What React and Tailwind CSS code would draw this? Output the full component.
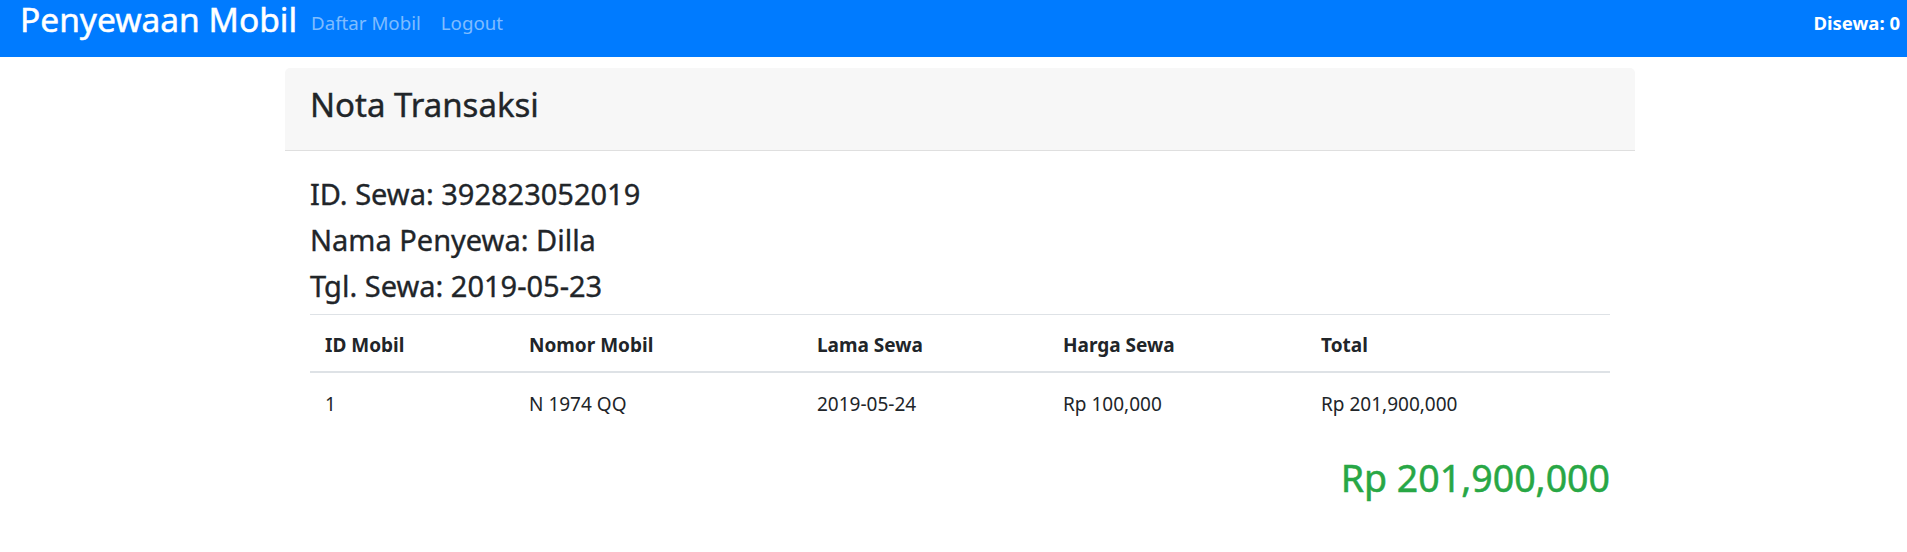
const rows = [
  { id: '1', nomor: 'N 1974 QQ', lama: '2019-05-24', harga: 'Rp 100,000', total: 'Rp 201,900,000' },
]

const cols = [
  { key: 'id', label: 'ID Mobil', w: 'w-[204px]' },
  { key: 'nomor', label: 'Nomor Mobil', w: 'w-[288px]' },
  { key: 'lama', label: 'Lama Sewa', w: 'w-[246px]' },
  { key: 'harga', label: 'Harga Sewa', w: 'w-[258px]' },
  { key: 'total', label: 'Total', w: 'w-[304px]' },
]

function Navbar() {
  return (
    <nav className="flex h-[57px] items-start justify-between bg-[#007bff] pl-[20px] pr-[7px]">
      <div className="flex items-start">
        <a
          href="#"
          className="mr-[4px] text-[33.5px] leading-[38px] text-white [-webkit-text-stroke:0.5px_currentColor]"
        >
          Penyewaan Mobil
        </a>
        <a href="#" className="mt-[9px] px-[10px] text-[18.7px] leading-[28px] text-white/50">
          Daftar Mobil
        </a>
        <a href="#" className="mt-[9px] px-[10px] text-[18.7px] leading-[28px] text-white/50">
          Logout
        </a>
      </div>
      <span className="mt-[9px] text-[18.5px] font-bold leading-[28px] text-white">
        Disewa: 0
      </span>
    </nav>
  )
}

export default function App() {
  return (
    <div className="min-h-screen bg-white font-['Segoe_UI','Noto_Sans',sans-serif] text-[#212529]">
      <Navbar />

      <div className="pl-[285px] pt-[11px]">
        <div className="w-[1350px] rounded-[5px] bg-white">
          <div className="h-[83px] rounded-t-[5px] border-b border-[#dfdfdf] bg-[#f7f7f7] px-[25px] pt-[16px]">
            <h3 className="text-[33px] leading-[42px] [-webkit-text-stroke:0.4px_currentColor]">
              Nota Transaksi
            </h3>
          </div>

          <div className="p-[25px] [&_h4]:[-webkit-text-stroke:0.35px_currentColor]">
            <h4 className="mb-[10px] text-[29px] leading-[36px]">ID. Sewa: 392823052019</h4>
            <h4 className="mb-[10px] text-[29px] leading-[36px]">Nama Penyewa: Dilla</h4>
            <h4 className="mb-[10px] text-[29px] leading-[36px]">Tgl. Sewa: 2019-05-23</h4>

            <div className="text-[19px] leading-[30px]">
              <div className="flex border-t border-b-2 border-[#dee2e6]">
                {cols.map((c) => (
                  <div key={c.key} className={`${c.w} px-[15px] pt-[15px] pb-[11px] font-bold`}>
                    {c.label}
                  </div>
                ))}
              </div>
              {rows.map((r) => (
                <div key={r.id} className="flex">
                  {cols.map((c) => (
                    <div key={c.key} className={`${c.w} px-[15px] pt-[16px] pb-[14px]`}>
                      {r[c.key]}
                    </div>
                  ))}
                </div>
              ))}
            </div>

            <h2 className="mt-[22px] text-right text-[37.5px] leading-[45px] text-[#28a745] [-webkit-text-stroke:0.5px_currentColor]">
              Rp 201,900,000
            </h2>
          </div>
        </div>
      </div>
    </div>
  )
}
